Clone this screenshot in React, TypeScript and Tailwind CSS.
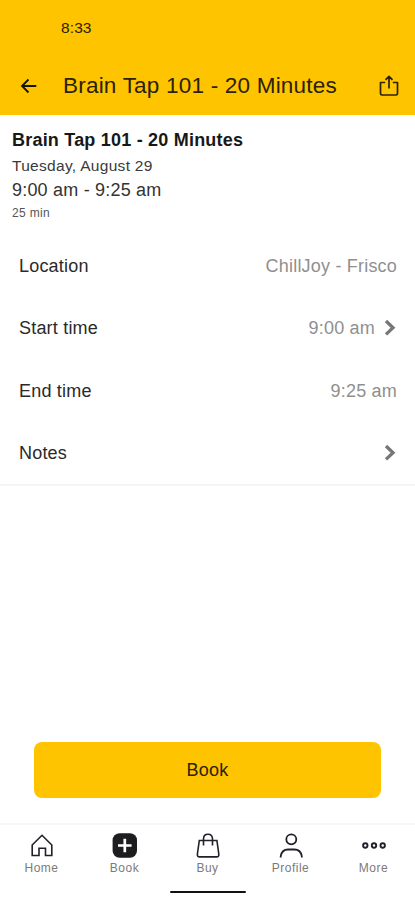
import React from 'react';

const Chevron = () => (
  <svg width="12" height="18" viewBox="0 0 12 18" fill="none" stroke="#777" strokeWidth="3.3" className="mr-px">
    <path d="M2 2 9 8.700l-7 6.700" />
  </svg>
);

function Row({ label, value, chevron }: { label: string; value?: string; chevron?: boolean }) {
  return (
    <div className="flex h-[62.3px] items-center justify-between pr-[18px] pl-[19px] text-[18px] tracking-[0.2px]">
      <span className="text-[#2a2a2a]">{label}</span>
      <span className="flex items-center gap-[9px] text-[#8f8f8f]">
        {value}
        {chevron && <Chevron />}
      </span>
    </div>
  );
}

function Tab({ label, children }: { label: string; children: React.ReactNode }) {
  return (
    <div className="flex flex-1 flex-col items-center">
      <svg width="26" height="26" viewBox="0 0 26 26" fill="none" stroke="#20202a" strokeWidth="1.6">
        {children}
      </svg>
      <span className="mt-px text-[12px] leading-4 tracking-[0.5px] text-[#7b7b7b]">{label}</span>
    </div>
  );
}

export default function App() {
  return (
    <div className="flex h-[900px] w-[415px] flex-col overflow-hidden bg-white font-['Liberation_Sans',Arial,sans-serif] text-[#181818]">
      <header className="h-[115px] shrink-0 bg-[#ffc400] text-[#2b2105]">
        <div className="flex h-[56px] items-center pl-[61px] text-[15.500px] tracking-[0.1px]">8:33</div>
        <div className="flex h-[59px] items-center pr-[16px] pl-[20px]">
          <svg width="18" height="18" viewBox="0 0 18 18" fill="none" stroke="#181404" strokeWidth="1.8">
            <path d="M16.300 9H2.500M8.500 2.500 2 9l6.500 6.500" />
          </svg>
          <h1 className="ml-[25px] flex-1 text-[22.500px] tracking-[0.21px] whitespace-nowrap">Brain Tap 101 - 20 Minutes</h1>
          <svg width="20" height="22" viewBox="0 0 20 22" fill="none" stroke="#2b2105" strokeWidth="1.7" strokeLinejoin="round">
            <path d="M6.200 7.500H1.500v11q0 1.500 1.500 1.500h14q1.500 0 1.500-1.500v-11h-4.700M10 13.500v-12M6.500 4.800l3.500-3.500 3.500 3.500" />
          </svg>
        </div>
      </header>
      <section className="flex h-[120px] shrink-0 flex-col pt-[13px] pl-[12px] whitespace-nowrap">
        <h2 className="text-[18px] leading-[24px] font-bold tracking-[0.21px]">Brain Tap 101 - 20 Minutes</h2>
        <p className="mt-[2px] text-[15.500px] leading-[24px] tracking-[0.3px] text-[#3a3a3a]">Tuesday, August 29</p>
        <p className="text-[18px] leading-[24px] tracking-[0.2px] text-[#333]">9:00 am - 9:25 am</p>
        <p className="mt-px text-[12px] leading-[20px] tracking-[0.35px] text-[#555]">25 min</p>
      </section>
      <section className="h-[251px] shrink-0 border-b-2 border-[#f5f5f5]">
        <Row label="Location" value="ChillJoy - Frisco" />
        <Row label="Start time" value="9:00 am" chevron />
        <div className="-mb-[0.500px] pt-[0.500px]">
          <Row label="End time" value="9:25 am" />
        </div>
        <Row label="Notes" chevron />
      </section>
      <main className="flex flex-1 flex-col justify-end px-[34px] pb-[25px]">
        <button className="h-[56px] w-[347px] rounded-[8px] bg-[#ffc400] text-[18px] tracking-[0.2px] text-[#2b2105]">Book</button>
      </main>
      <nav className="flex h-[77px] shrink-0 flex-col items-center border-t-2 border-[#f8f8f8]">
        <div className="flex w-full pt-[8px]">
          <Tab label="Home">
            <path d="M3.200 12 13 2.300 22.800 12v10.500h-6.300v-7.200h-6.500v7.200H3.200z" />
          </Tab>
          <Tab label="Book">
            <rect x="0.600" y="0.300" width="24.400" height="24.400" rx="7" fill="#1d1d1f" stroke="none" />
            <path d="M12.800 5.800v13.400M6 12.500h13.600" stroke="#fff" strokeWidth="2.700" />
          </Tab>
          <Tab label="Buy">
            <path d="M4.300 7.500h17.600l1.900 13.500q.3 2.900-2.200 2.900H4.600q-2.500 0-2.200-2.900zM8.500 12.500V6q0-4.800 4.500-4.800T17.500 6v6.500" />
          </Tab>
          <Tab label="Profile">
            <circle cx="13.300" cy="6.300" r="5" strokeWidth="1.800" />
            <path d="M2.700 24.500v-1.300q1.300-6.700 7.300-6.700h6.500q6 0 7.300 6.700v1.300" strokeWidth="1.800" />
          </Tab>
          <Tab label="More">
            <circle cx="4.300" cy="12.500" r="2.200" strokeWidth="1.900" />
            <circle cx="13" cy="12.500" r="2.200" strokeWidth="1.900" />
            <circle cx="21.700" cy="12.500" r="2.200" strokeWidth="1.900" />
          </Tab>
        </div>
        <div className="mt-[15px] h-[2px] w-[76px] rounded-full bg-[#111]" />
      </nav>
    </div>
  );
}
